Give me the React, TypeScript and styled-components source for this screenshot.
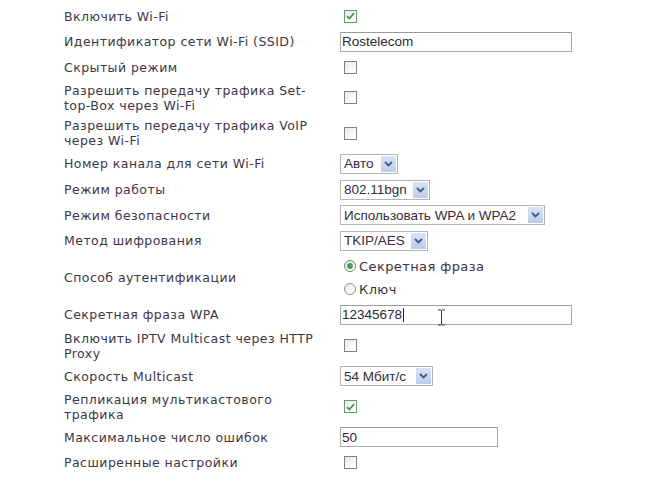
import React from 'react';
import styled, { createGlobalStyle } from 'styled-components';

const GlobalStyle = createGlobalStyle`
  html, body {
    margin: 0;
    padding: 0;
    background: #ffffff;
  }
  body {
    font-family: "DejaVu Sans", Verdana, sans-serif;
  }
`;

const Page = styled.div`
  width: 648px;
  height: 494px;
  overflow: hidden;
  padding: 6px 0 0 64px;
  box-sizing: border-box;
  position: relative;
`;

const Form = styled.div`
  display: grid;
  grid-template-columns: 276px 1fr;
  row-gap: 5.6px;
  align-items: center;
`;

const Label = styled.div`
  font-size: 12.5px;
  letter-spacing: 0.45px;
  line-height: 15px;
  color: #3e3646;
  padding-right: 16px;
`;

const Cell = styled.div`
  min-height: 20px;
  display: flex;
  flex-direction: column;
  justify-content: center;
`;

const Box = styled.span<{ checked?: boolean }>`
  display: inline-flex;
  align-items: center;
  justify-content: center;
  width: 13px;
  height: 13px;
  margin-left: 4px;
  box-sizing: border-box;
  border: 1px solid #7d8488;
  background: linear-gradient(135deg, #e6e6e6 0%, #ffffff 80%);
  border-color: ${(p) => (p.checked ? '#6a9a6e' : '#7d8488')};
`;

const TextInput = styled.div<{ w: number }>`
  width: ${(p) => p.w}px;
  height: 20px;
  box-sizing: border-box;
  border: 1px solid #a9a9a9;
  border-top-color: #9a9a9a;
  font-family: "Liberation Sans", Arial, sans-serif;
  font-size: 13.5px;
  color: #2d2633;
  padding: 0 1px;
  display: flex;
  align-items: center;
`;

const Caret = styled.span`
  display: inline-block;
  width: 1px;
  height: 14px;
  background: #222;
  margin-left: 1px;
`;

const Select = styled.div<{ w: number }>`
  width: ${(p) => p.w}px;
  height: 20px;
  box-sizing: border-box;
  border: 1px solid #b5b5b5;
  display: flex;
  align-items: stretch;
  font-family: "Liberation Sans", Arial, sans-serif;
  font-size: 13.5px;
  color: #352d3b;
  background: #fff;
`;

const SelectValue = styled.span`
  flex: 1;
  display: flex;
  align-items: center;
  padding-left: 3px;
  white-space: nowrap;
`;

const Arrow = styled.span`
  width: 15px;
  margin: 1px;
  background: linear-gradient(180deg, #d9e3f5 0%, #bccdeb 100%);
  display: flex;
  align-items: center;
  justify-content: center;
`;

const RadioGroup = styled.div`
  display: flex;
  flex-direction: column;
  gap: 3px;
`;

const RadioRow = styled.div`
  display: flex;
  align-items: center;
  height: 20px;
  font-size: 13px;
  letter-spacing: 0.4px;
  color: #3a3340;
  margin-left: 4px;
`;

const RadioDot = styled.span<{ on?: boolean }>`
  width: 12px;
  height: 12px;
  border-radius: 50%;
  box-sizing: border-box;
  border: 1px solid ${(p) => (p.on ? '#5f8f66' : '#8a8f93')};
  background: linear-gradient(135deg, #e8e8e8 0%, #ffffff 80%);
  margin-right: 3px;
  display: flex;
  align-items: center;
  justify-content: center;
  &::after {
    content: '';
    display: ${(p) => (p.on ? 'block' : 'none')};
    width: 6px;
    height: 6px;
    border-radius: 50%;
    background: #4e9a5a;
  }
`;

const Cursor = styled.svg`
  position: absolute;
  left: 437px;
  top: 309px;
`;

const Tick = () => (
  <svg width="9" height="8" viewBox="0 0 9 8">
    <path d="M1 4.2 L3.4 6.5 L8 1.2" fill="none" stroke="#3d9a45" strokeWidth="1.8" />
  </svg>
);

const Check = ({ checked }: { checked?: boolean }) => (
  <Box checked={checked}>{checked && <Tick />}</Box>
);

const Drop = ({ w, value }: { w: number; value: string }) => (
  <Select w={w}>
    <SelectValue>{value}</SelectValue>
    <Arrow>
      <svg width="9" height="6" viewBox="0 0 9 6">
        <path d="M1 1 L4.5 4.5 L8 1" fill="none" stroke="#3f5a8c" strokeWidth="1.8" />
      </svg>
    </Arrow>
  </Select>
);

const App: React.FC = () => {
  return (
    <Page>
      <GlobalStyle />
      <Form>
        <Label>Включить Wi-Fi</Label>
        <Cell><Check checked /></Cell>

        <Label>Идентификатор сети Wi-Fi (SSID)</Label>
        <Cell><TextInput w={232}>Rostelecom</TextInput></Cell>

        <Label>Скрытый режим</Label>
        <Cell><Check /></Cell>

        <Label>Разрешить передачу трафика Set-top-Box через Wi-Fi</Label>
        <Cell><Check /></Cell>

        <Label>Разрешить передачу трафика VoIP через Wi-Fi</Label>
        <Cell><Check /></Cell>

        <Label>Номер канала для сети Wi-Fi</Label>
        <Cell><Drop w={58} value="Авто" /></Cell>

        <Label>Режим работы</Label>
        <Cell><Drop w={90} value="802.11bgn" /></Cell>

        <Label>Режим безопасности</Label>
        <Cell><Drop w={205} value="Использовать WPA и WPA2" /></Cell>

        <Label>Метод шифрования</Label>
        <Cell><Drop w={88} value="TKIP/AES" /></Cell>

        <Label>Способ аутентификации</Label>
        <Cell>
          <RadioGroup>
            <RadioRow><RadioDot on />Секретная фраза</RadioRow>
            <RadioRow><RadioDot />Ключ</RadioRow>
          </RadioGroup>
        </Cell>

        <Label>Секретная фраза WPA</Label>
        <Cell><TextInput w={232}>12345678<Caret /></TextInput></Cell>

        <Label>Включить IPTV Multicast через HTTP Proxy</Label>
        <Cell><Check /></Cell>

        <Label>Скорость Multicast</Label>
        <Cell><Drop w={93} value="54 Мбит/с" /></Cell>

        <Label>Репликация мультикастового трафика</Label>
        <Cell><Check checked /></Cell>

        <Label>Максимальное число ошибок</Label>
        <Cell><TextInput w={158}>50</TextInput></Cell>

        <Label>Расширенные настройки</Label>
        <Cell><Check /></Cell>
      </Form>
      <Cursor width="9" height="17" viewBox="0 0 9 17">
        <path d="M1 1 H3.5 M5.5 1 H8 M4.5 1.5 V15.5 M1 16 H3.5 M5.5 16 H8 M3.5 1 L4.5 1.8 L5.5 1 M3.5 16 L4.5 15.2 L5.5 16" fill="none" stroke="#333" strokeWidth="1" />
      </Cursor>
    </Page>
  );
};

export default App;
